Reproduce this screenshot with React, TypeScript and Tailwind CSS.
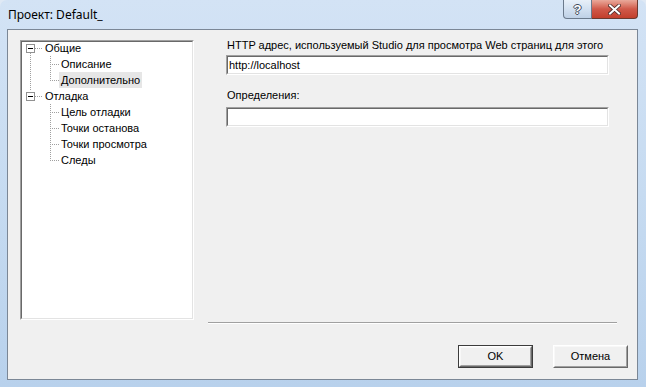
import React from "react";

const font = { fontFamily: '"Liberation Sans", Arial, sans-serif' };

function Sunken({ className = "", children }: { className?: string; children?: React.ReactNode }) {
  return (
    <div className={`border border-t-[#a0a0a0] border-l-[#a0a0a0] border-b-white border-r-white ${className}`}>
      <div className="h-full w-full overflow-hidden border border-t-[#696969] border-l-[#696969] border-b-[#e3e3e3] border-r-[#e3e3e3] bg-white">
        {children}
      </div>
    </div>
  );
}

function Btn({ label, def }: { label: string; def?: boolean }) {
  const inner = (
    <div className="h-full w-full border border-t-white border-l-white border-b-[#696969] border-r-[#696969]">
      <div className="flex h-full w-full items-center justify-center border border-t-[#f8f8f8] border-l-[#f8f8f8] border-b-[#a0a0a0] border-r-[#a0a0a0] bg-[#f0f0f0] text-[11px] text-black">
        {label}
      </div>
    </div>
  );
  return (
    <div className={`h-[23px] w-[75px] ${def ? "border border-[#3c3c3c]" : ""}`}>{inner}</div>
  );
}

const rows: { text: string; level: number; selected?: boolean }[] = [
  { text: "Общие", level: 0 },
  { text: "Описание", level: 1 },
  { text: "Дополнительно", level: 1, selected: true },
  { text: "Отладка", level: 0 },
  { text: "Цель отладки", level: 1 },
  { text: "Точки останова", level: 1 },
  { text: "Точки просмотра", level: 1 },
  { text: "Следы", level: 1 },
];

function TreeLines() {
  const dot = { stroke: "#a0a0a0", strokeWidth: 1, strokeDasharray: "1 1" };
  return (
    <svg className="pointer-events-none absolute left-0 top-0" width="172" height="200">
      <line x1="8.5" y1="13" x2="8.5" y2="51" {...dot} />
      <line x1="28.5" y1="16" x2="28.5" y2="40" {...dot} />
      <line x1="28" y1="24.5" x2="37" y2="24.5" {...dot} />
      <line x1="28" y1="40.5" x2="37" y2="40.5" {...dot} />
      <line x1="28.5" y1="64" x2="28.5" y2="120" {...dot} />
      <line x1="28" y1="72.5" x2="37" y2="72.5" {...dot} />
      <line x1="28" y1="88.5" x2="37" y2="88.5" {...dot} />
      <line x1="28" y1="104.5" x2="37" y2="104.5" {...dot} />
      <line x1="28" y1="120.5" x2="37" y2="120.5" {...dot} />
      {[4, 52].map((y) => (
        <g key={y}>
          <line x1="13" y1={y + 4.5} x2="20" y2={y + 4.5} {...dot} />
          <rect x="4.5" y={y + 0.5} width="8" height="8" fill="white" stroke="#919191" />
          <line x1="6" y1={y + 4.5} x2="11" y2={y + 4.5} stroke="#000" />
        </g>
      ))}
    </svg>
  );
}

export default function App() {
  return (
    <div className="h-[387px] w-[646px] overflow-hidden bg-[#dfe9f5]" style={font}>
      <div className="flex h-full w-full flex-col rounded-t-[7px] bg-gradient-to-b from-[#d3e3f5] via-[#c6dbf1] to-[#b8d1ec] px-[7px] pb-[7px] pr-[8px]">
        {/* title bar */}
        <div className="relative flex h-[22px] items-end justify-between">
          <div className="ml-[1px] text-[12px] leading-[14px] text-black" style={{ fontFamily: '"Noto Sans", "Open Sans", sans-serif' }}>
            Проект: Default_
          </div>
          <div className="flex h-[19px] self-start">
            <div className="flex h-[19px] w-[29px] items-center justify-center rounded-bl-[4px] border border-t-0 border-[#6b7a8c] bg-gradient-to-b from-[#e8f0f9] via-[#d3e1f1] to-[#bfd1e6]">
              <span
                className="text-[13px] font-bold leading-none text-white"
                style={{ textShadow: "1px 0 #3f4b5c, -1px 0 #3f4b5c, 0 1px #3f4b5c, 0 -1px #3f4b5c" }}
              >
                ?
              </span>
            </div>
            <div className="flex h-[19px] w-[46px] items-center justify-center rounded-br-[4px] border border-l-0 border-t-0 border-[#6b3a30] bg-gradient-to-b from-[#e9a99b] via-[#d0594a] to-[#c23f2c]">
              <svg width="13" height="11" viewBox="0 0 13 11">
                <path d="M2 1.5 L11 9.5 M11 1.5 L2 9.5" stroke="#4a2a28" strokeWidth="3.6" strokeLinecap="square" />
                <path d="M2 1.5 L11 9.5 M11 1.5 L2 9.5" stroke="#ffffff" strokeWidth="2" strokeLinecap="square" />
              </svg>
            </div>
          </div>
        </div>
        <div className="h-[7px]" />
        {/* client area */}
        <div className="flex flex-1 flex-col border border-[#7b8796] bg-[#f0f0f0] text-[11px] text-black">
          <div className="flex pl-[12px] pt-[10px]">
            <Sunken className="h-[280px] w-[174px]">
              <div className="relative -mt-[2px] h-full w-full">
                <TreeLines />
                <div className="relative flex flex-col">
                  {rows.map((r) => (
                    <div key={r.text} className="flex h-[16px] items-center" style={{ paddingLeft: r.level === 0 ? 21 : 37 }}>
                      <span className={`px-[2px] leading-[16px] ${r.selected ? "bg-[#e6e6e6]" : ""}`}>{r.text}</span>
                    </div>
                  ))}
                </div>
              </div>
            </Sunken>
            <div className="ml-[32px] flex w-[383px] flex-col">
              <div className="mt-[-3px] pl-[1px] leading-[16px]">HTTP адрес, используемый Studio для просмотра Web страниц для этого</div>
              <Sunken className="mt-[2px] h-[20px] w-full">
                <div className="pl-[1px] leading-[16px]">http://localhost</div>
              </Sunken>
              <div className="mt-[12px] pl-[1px] leading-[16px]">Определения:</div>
              <Sunken className="mt-[4px] h-[20px] w-full" />
            </div>
          </div>
          <div className="ml-[200px] mt-[2px] h-[2px] w-[409px] border-t border-t-[#a0a0a0] border-b border-b-white" />
          <div className="mt-[21px] flex justify-end gap-[20px] pr-[9px]">
            <Btn label="OK" def />
            <Btn label="Отмена" />
          </div>
        </div>
      </div>
    </div>
  );
}
